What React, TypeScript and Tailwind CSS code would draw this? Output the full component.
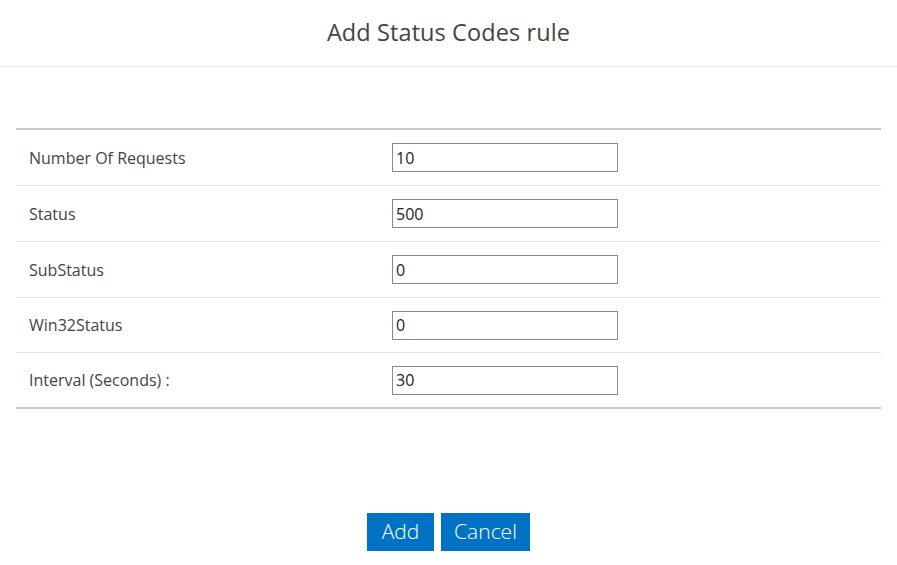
import React from 'react';

const rows = [
  { label: 'Number Of Requests', value: '10', h: 'h-[56px]' },
  { label: 'Status', value: '500', h: 'h-[56px]' },
  { label: 'SubStatus', value: '0', h: 'h-[56px]' },
  { label: 'Win32Status', value: '0', h: 'h-[55px]' },
  { label: 'Interval (Seconds) :', value: '30', h: 'h-[54px]' },
];

const App = () => {
  return (
    <div className="w-[897px] h-[565px] bg-white text-[#444] font-['Open_Sans',sans-serif] flex flex-col">
      {/* Header */}
      <div className="h-[67px] border-b border-[#e5e5e5] flex items-center justify-center">
        <h1 className="text-[23.5px] text-[#444] tracking-[0.1px]">Add Status Codes rule</h1>
      </div>

      {/* Rule table */}
      <div className="mx-4 mt-[61px] border-t-2 border-b-2 border-[#c8c8c8]">
        {rows.map((row, i) => (
          <div
            key={row.label}
            className={`${row.h} flex items-center ${i < rows.length - 1 ? 'border-b border-[#e3e3e3]' : ''}`}
          >
            <div className="w-[376px] pl-[13px] text-[16px] text-[#444]">{row.label}</div>
            <input
              readOnly
              value={row.value}
              className="w-[226px] h-[29px] border border-[#8a8a8a] px-[3px] text-[16px] text-[#222] outline-none"
            />
          </div>
        ))}
      </div>

      {/* Actions */}
      <div className="mt-auto mb-[14px] flex justify-center gap-[7px]">
        <button className="h-[38px] w-[67px] bg-[#0072c6] text-white text-[21px] font-light">Add</button>
        <button className="h-[38px] w-[89px] bg-[#0072c6] text-white text-[21px] font-light">Cancel</button>
      </div>
    </div>
  );
};

export default App;
